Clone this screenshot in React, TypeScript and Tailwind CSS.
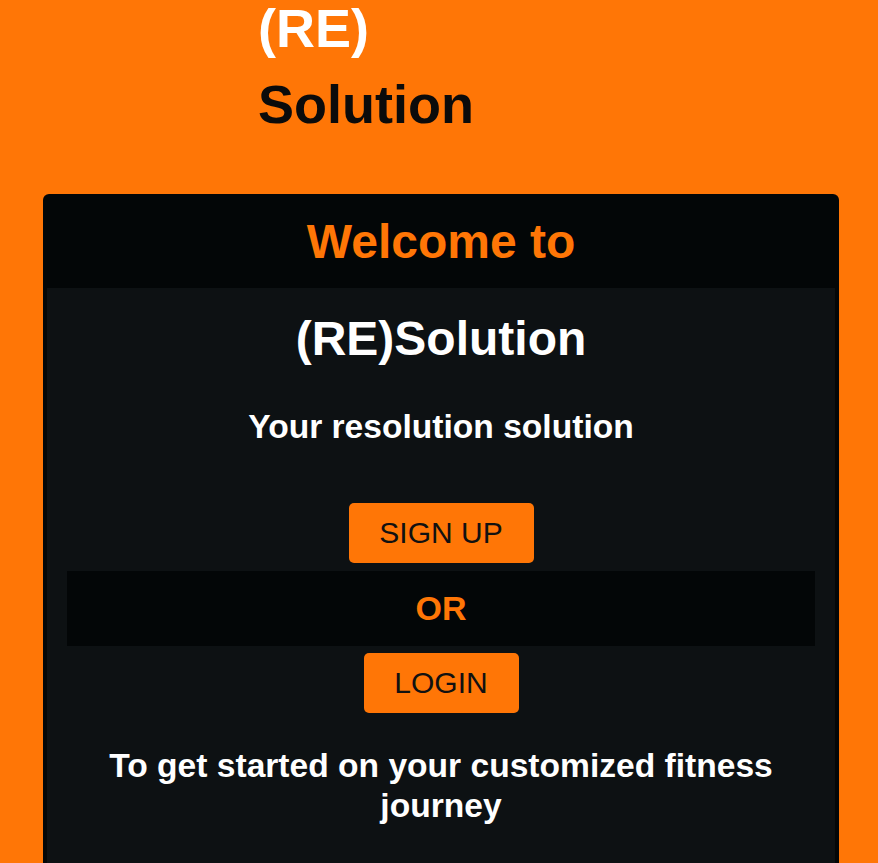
export default function App() {
  return (
    <div className="min-h-screen bg-[#ff7606] font-['Liberation_Sans',Arial,sans-serif] pb-10">
      {/* Site title */}
      <h1 className="pl-[258px] pt-[2px] text-[54px] font-bold leading-[53px]">
        <span className="block text-white">(RE)</span>
        <span className="block mt-[23px] text-[#0b0b0b]">Solution</span>
      </h1>

      {/* Welcome card */}
      <div className="ml-[43px] mr-[39px] mt-[63px] rounded-md bg-[#030607] px-[4px]">
        <div className="h-[94px] flex items-center justify-center">
          <h2 className="text-[48px] font-bold text-[#ff7606] leading-[55px]">Welcome to</h2>
        </div>

        <div className="bg-[#0d1113] pt-[23px] pb-[60px] flex flex-col items-center text-center">
          <h2 className="text-[48px] font-bold text-white leading-[55px]">(RE)Solution</h2>
          <p className="mt-[42px] text-[33.6px] font-bold text-white leading-[38px]">Your resolution solution</p>

          <button className="mt-[57px] h-[60px] w-[185px] rounded-[5px] bg-[#ff7606] text-[30px] text-[#111] leading-none">
            SIGN UP
          </button>

          <div className="mt-[8px] self-stretch mx-[20px] h-[75px] bg-[#030607] flex items-center justify-center">
            <span className="text-[34px] font-bold text-[#ff7606]">OR</span>
          </div>

          <button className="mt-[7px] h-[60px] w-[155px] rounded-[5px] bg-[#ff7606] text-[30px] text-[#111] leading-none">
            LOGIN
          </button>

          <p className="mt-[33px] px-5 text-[33.6px] font-bold text-white leading-[40px]">
            To get started on your customized fitness journey
          </p>
        </div>
      </div>
    </div>
  );
}
